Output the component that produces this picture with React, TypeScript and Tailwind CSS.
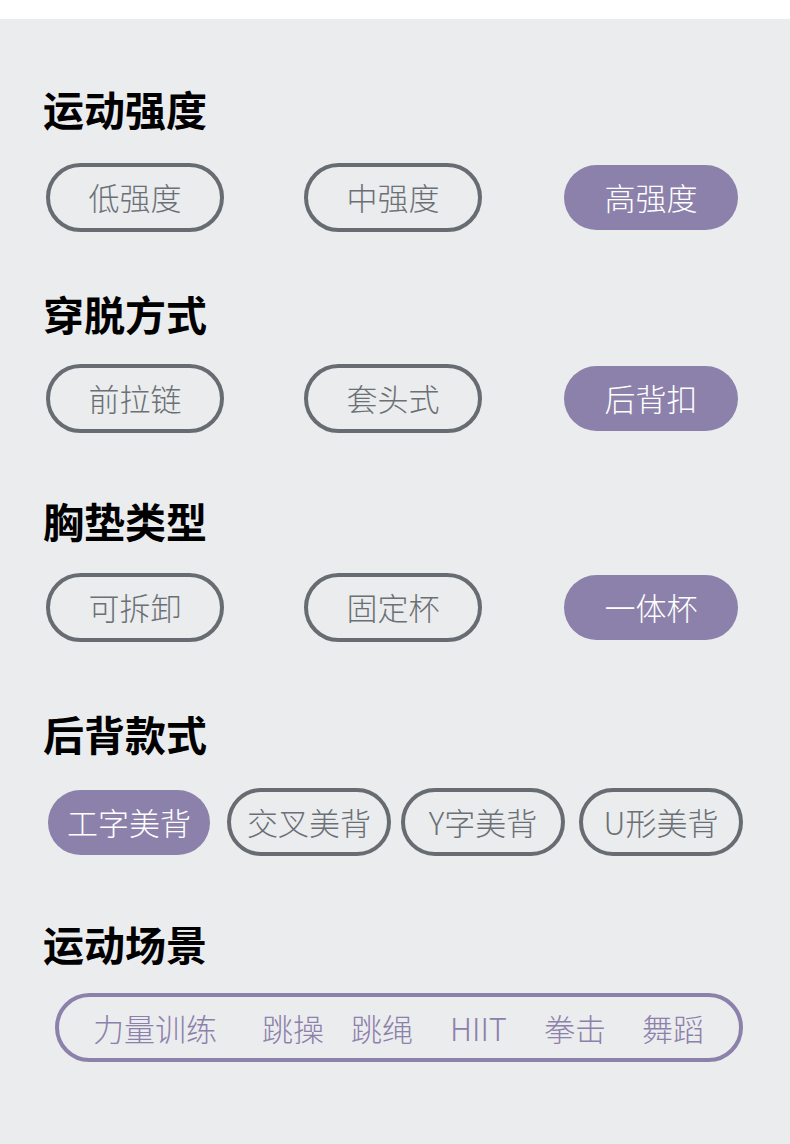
const sections = [
  { title: "运动强度", options: ["低强度", "中强度", "高强度"], active: 2 },
  { title: "穿脱方式", options: ["前拉链", "套头式", "后背扣"], active: 2 },
  { title: "胸垫类型", options: ["可拆卸", "固定杯", "一体杯"], active: 2 },
];

const headingMargins = ["mt-0", "mt-[61px]", "mt-[67px]"];
const rowMargins = ["mt-[35px]", "mt-[31px]", "mt-[33px]"];

const backStyles = [
  { label: "工字美背", active: true, cls: "ml-[5px] w-[162px]" },
  { label: "交叉美背", active: false, cls: "ml-[17px] w-[164px]" },
  { label: "Y字美背", active: false, cls: "ml-[10px] w-[164px]" },
  { label: "U形美背", active: false, cls: "ml-[14px] w-[164px]" },
];

const scenes = [
  { label: "力量训练", cls: "ml-[34px]" },
  { label: "跳操", cls: "ml-[45px]" },
  { label: "跳绳", cls: "ml-[27px]" },
  { label: "HIIT", cls: "ml-[37px]" },
  { label: "拳击", cls: "ml-[37px]" },
  { label: "舞蹈", cls: "ml-[36px]" },
];

const Heading = ({ children, className }: { children: string; className: string }) => (
  <h2 className={`text-[41px] leading-[40px] font-bold text-black ${className}`}>{children}</h2>
);

const Pill = ({ label, active }: { label: string; active: boolean }) =>
  active ? (
    <div className="w-[178px] h-[69px] flex items-center justify-center">
      <div className="w-[174px] h-[65px] rounded-full bg-[#8c81aa] text-white flex items-center justify-center text-[31px] font-light">
        {label}
      </div>
    </div>
  ) : (
    <div className="w-[178px] h-[69px] rounded-full border-4 border-[#666c71] text-[#6a7075] flex items-center justify-center text-[31px] font-light">
      {label}
    </div>
  );

export default function App() {
  return (
    <div
      className="w-[790px] h-[1144px] bg-white"
      style={{ fontFamily: '"Noto Sans CJK SC", "Noto Sans", sans-serif' }}
    >
      <div className="h-[19px] bg-white" />
      <div className="h-[1125px] bg-[#ebecee] px-[43px] pt-[69px]">
        {sections.map((section, i) => (
          <div key={section.title}>
            <Heading className={headingMargins[i]}>{section.title}</Heading>
            <div className={`flex gap-[80px] ml-[3px] ${rowMargins[i]}`}>
              {section.options.map((opt, j) => (
                <Pill key={opt} label={opt} active={j === section.active} />
              ))}
            </div>
          </div>
        ))}

        <Heading className="mt-[71px]">后背款式</Heading>
        <div className="flex items-center mt-[35px] h-[68px]">
          {backStyles.map((item) =>
            item.active ? (
              <div
                key={item.label}
                className={`${item.cls} h-[65px] rounded-full bg-[#8c81aa] text-white flex items-center justify-center text-[31px] font-light`}
              >
                {item.label}
              </div>
            ) : (
              <div
                key={item.label}
                className={`${item.cls} h-[68px] rounded-full border-4 border-[#666c71] text-[#6a7075] flex items-center justify-center text-[31px] font-light`}
              >
                {item.label}
              </div>
            )
          )}
        </div>

        <Heading className="mt-[67px]">运动场景</Heading>
        <div className="mt-[30px] ml-[12px] w-[688px] h-[69px] rounded-full border-4 border-[#8c81aa] flex items-center text-[31px] font-light text-[#8c81aa]">
          {scenes.map((s) => (
            <span key={s.label} className={`${s.cls} leading-none`}>
              {s.label}
            </span>
          ))}
        </div>
      </div>
    </div>
  );
}
